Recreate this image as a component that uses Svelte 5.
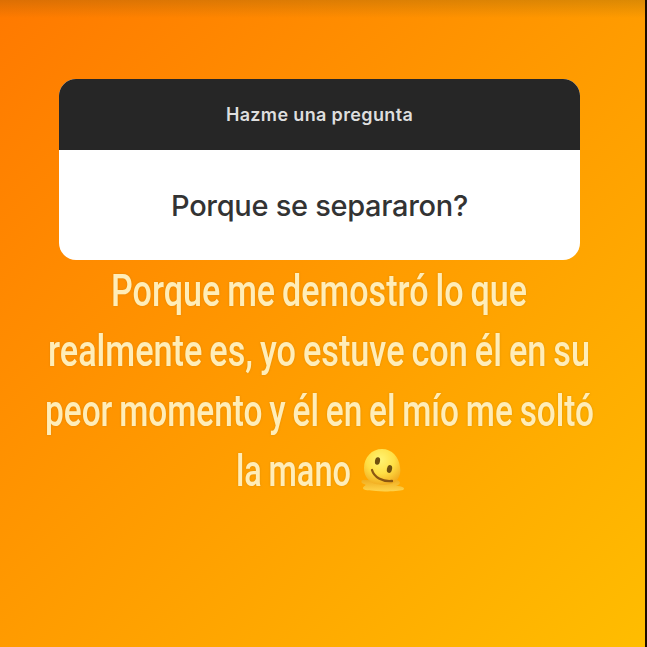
<script>
    const title = 'Hazme una pregunta'
    const question = 'Porque se separaron?'
    // natural is the uncondensed width of the line, width is what it takes on screen
    const answer = [
        { text: 'Porque me demostró lo que', width: 416, natural: 535 },
        { text: 'realmente es, yo estuve con él en su', width: 542, natural: 710 },
        { text: 'peor momento y él en el mío me soltó', width: 549, natural: 745 },
        { text: 'la mano', width: 115, natural: 150, emoji: true }
    ]
</script>

<main class="story">
    <section class="card">
        <header>{title}</header>
        <p>{question}</p>
    </section>
    <div class="answer">
        {#each answer as line}
            <div class="line" class:last={line.emoji}>
                <svg class="words" width={line.width} height="60" viewBox="0 0 {line.natural} 60" preserveAspectRatio="none">
                    <text x="0" y="43" textLength={line.natural} lengthAdjust="spacingAndGlyphs">{line.text}</text>
                </svg>
                {#if line.emoji}
                    <svg class="emoji" width="46" height="46" viewBox="0 0 46 46">
                        <defs>
                            <radialGradient id="face" cx="45%" cy="30%" r="70%">
                                <stop offset="0" stop-color="#fff473" />
                                <stop offset="0.55" stop-color="#ffdf45" />
                                <stop offset="1" stop-color="#f2ae22" />
                            </radialGradient>
                            <linearGradient id="puddle" x1="0" y1="0" x2="0" y2="1">
                                <stop offset="0" stop-color="#f0ad20" />
                                <stop offset="1" stop-color="#ffd44c" />
                            </linearGradient>
                        </defs>
                        <path fill="url(#puddle)" d="M5 33 C1 32 0 36 4 37 C8 38 3 39 3 41 C3 44 10 43 16 44 C25 45 39 44 43 43 C46 41 42 39 36 39 C42 37 40 34 37 33 Z" />
                        <path fill="url(#face)" d="M22 2 C12 2 4 10 4 21 C4 28 7 32 11 35 C16 39 34 39 37 33 C40 29 41 25 40 20 C39 10 32 2 22 2 Z" />
                        <ellipse cx="17.5" cy="14" rx="2.5" ry="3.8" fill="#70500e" transform="rotate(12 17.5 14)" />
                        <ellipse cx="29.5" cy="22" rx="2.5" ry="4" fill="#70500e" transform="rotate(15 29.5 22)" />
                        <path d="M12 23 C14 30 22 35 32 34" fill="none" stroke="#8c5711" stroke-width="2.3" stroke-linecap="round" />
                    </svg>
                {/if}
            </div>
        {/each}
    </div>
</main>

<style>
    :global(body) {
        margin: 0;
        background: #1d0c00;
    }

    .story {
        box-sizing: border-box;
        width: 645px;
        height: 647px;
        padding: 79px 0 0;
        overflow: hidden;
        background:
            linear-gradient(rgba(80, 70, 20, 0.2), rgba(80, 70, 20, 0) 18px),
            linear-gradient(135deg, #ff7900 0%, #ff9b00 50%, #ffbd00 100%);
    }

    .card {
        width: 521px;
        height: 181px;
        margin-left: 59px;
        border-radius: 17px;
        overflow: hidden;
        background: #fff;
        font-family: Inter, "Liberation Sans", sans-serif;
        text-align: center;
    }

    .card header {
        height: 71px;
        line-height: 71px;
        background: #262626;
        color: #dedede;
        font-size: 18px;
        font-weight: 600;
        letter-spacing: 0.35px;
    }

    .card p {
        margin: 0;
        line-height: 111px;
        color: #333;
        font-size: 29px;
        font-weight: 500;
        letter-spacing: -0.3px;
    }

    .answer {
        width: 638px;
        padding-top: 3px;
    }

    .line {
        display: flex;
        justify-content: center;
        align-items: center;
        gap: 9px;
        height: 60px;
    }

    .line.last {
        padding-left: 4px;
    }

    .words {
        display: block;
        overflow: visible;
        font-family: Roboto, "Liberation Sans", sans-serif;
        font-size: 45px;
        font-weight: 500;
        word-spacing: -2px;
        fill: #ffedb8;
        filter: drop-shadow(0 0 1px rgba(170, 110, 0, 0.35));
    }

    .emoji {
        margin-bottom: 7px;
    }
</style>
